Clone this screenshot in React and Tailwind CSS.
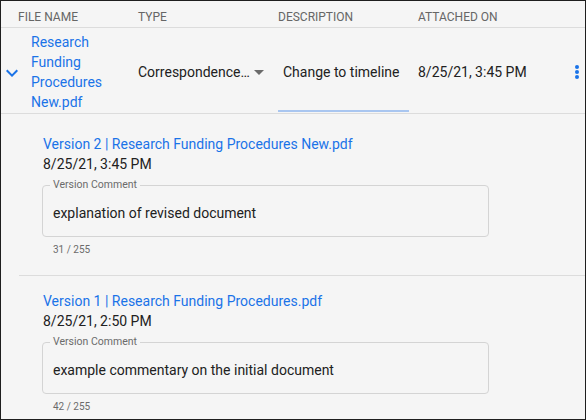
import React from 'react';

const versions = [
  {
    id: 2,
    title: 'Version 2 | Research Funding Procedures New.pdf',
    date: '8/25/21, 3:45 PM',
    comment: 'explanation of revised document',
  },
  {
    id: 1,
    title: 'Version 1 | Research Funding Procedures.pdf',
    date: '8/25/21, 2:50 PM',
    comment: 'example commentary on the initial document',
  },
];

const Chevron = () => (
  <svg width="14" height="14" viewBox="5 5 14 14" className="text-[#1a73e8]">
    <path d="M7.41 8.59 12 13.17l4.59-4.58L18 10l-6 6-6-6z" fill="currentColor" />
  </svg>
);

const VersionBlock = ({ version, first }) => (
  <div className={`ml-[18px] pl-[24px] ${first ? 'pt-[20px]' : 'pt-[15px] border-t border-[#dcdcdc]'} pb-[18px]`}>
    <div className="text-[14px] leading-[20px] text-[#1a73e8]">{version.title}</div>
    <div className="text-[14px] leading-[20px] text-[#212121]">{version.date}</div>
    <div className="relative mt-[11px] w-[447px] h-[52px] border border-[#d4d4d4] rounded-[4px] flex items-center pl-[10px] pt-[5px] -ml-[1px]">
      <span className="absolute -top-[8px] left-[7px] px-[3px] bg-[#f5f5f5] text-[10.5px] leading-[14px] text-[#6b6b6b]">
        Version Comment
      </span>
      <span className="text-[14px] text-[#212121]">{version.comment}</span>
    </div>
    <div className="mt-[6px] pl-[10px] text-[10px] leading-[14px] text-[#6b6b6b]">
      {version.comment.length} / 255
    </div>
  </div>
);

const App = () => {
  return (
    <div className="w-[586px] h-[420px] overflow-hidden border border-[#1e1e1e] bg-[#f5f5f5] font-['Roboto',sans-serif]">
      <div className="grid grid-cols-[137px_140px_140px_1fr] h-[27px] items-end pb-[2px] border-b border-[#dcdcdc] text-[12px] leading-[16px] text-[#666]">
        <div className="pl-[17px]">FILE NAME</div>
        <div>TYPE</div>
        <div>DESCRIPTION</div>
        <div>ATTACHED ON</div>
      </div>

      <div className="grid grid-cols-[137px_140px_140px_1fr] h-[86px] pt-[3px] border-b border-[#dcdcdc]">
        <div className="flex items-center">
          <div className="w-[30px] flex justify-start pl-[4px] pt-[1px]">
            <Chevron />
          </div>
          <div className="w-[84px] text-[14px] leading-[20px] text-[#1a73e8]">
            Research Funding Procedures New.pdf
          </div>
        </div>
        <div className="flex items-center text-[14px] text-[#212121]">
          <span className="max-w-[112px] truncate">Correspondence and Memos</span>
          <svg width="10" height="5" viewBox="0 0 10 5" className="ml-[4px]">
            <path d="M0 0h10L5 5z" fill="#6b6b6b" />
          </svg>
        </div>
        <div className="flex items-center pl-[5px] pt-[4px] mr-[9px] mb-[1px] border-b-2 border-[#a9c6f0] text-[14px] text-[#212121]">
          Change to timeline
        </div>
        <div className="flex items-center justify-between pr-[6px] text-[14px] text-[#212121]">
          <span>8/25/21, 3:45 PM</span>
          <div className="flex flex-col gap-[1px]">
            <span className="w-[4px] h-[4px] rounded-full bg-[#1a73e8]" />
            <span className="w-[4px] h-[4px] rounded-full bg-[#1a73e8]" />
            <span className="w-[4px] h-[4px] rounded-full bg-[#1a73e8]" />
          </div>
        </div>
      </div>

      {versions.map((v, i) => (
        <VersionBlock key={v.id} version={v} first={i === 0} />
      ))}
    </div>
  );
};

export default App;
